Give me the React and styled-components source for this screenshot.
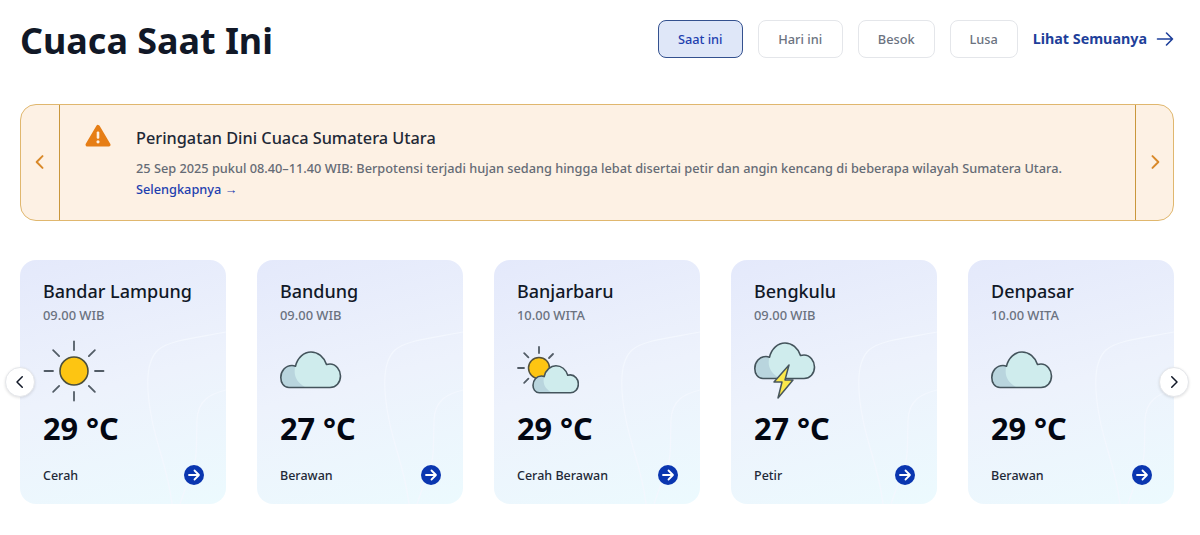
import styled, { createGlobalStyle } from "styled-components";

const GlobalStyle = createGlobalStyle`
  html, body {
    margin: 0;
    background: #fff;
    font-family: "Noto Sans", "Open Sans", sans-serif;
  }
`;

const Page = styled.div`
  width: 1200px;
  height: 535px;
  box-sizing: border-box;
  padding: 20px 26px 0 20px;
  overflow: hidden;
`;

const Header = styled.header`
  display: flex;
  align-items: center;
  justify-content: space-between;
  height: 38px;
`;

const Title = styled.h1`
  margin: 4px 0 0;
  font-size: 35.9px;
  line-height: 42px;
  font-weight: 700;
  color: #111827;
`;

const Tabs = styled.nav`
  display: flex;
  align-items: center;
`;

const Tab = styled.button`
  width: ${(p) => p.$width}px;
  height: 38px;
  margin-right: 15px;
  padding: 0;
  box-sizing: border-box;
  border-radius: 8px;
  font: 500 12.75px "Noto Sans", sans-serif;
  border: 1px solid ${(p) => (p.$active ? "#34518f" : "#e4e6ea")};
  background: ${(p) => (p.$active ? "#dfe7f8" : "#fff")};
  color: ${(p) => (p.$active ? "#1e40af" : "#6b7280")};
`;

const SeeAll = styled.a`
  display: flex;
  align-items: center;
  gap: 9px;
  margin-top: -1px;
  font-size: 14.3px;
  font-weight: 700;
  color: #1e3f9a;
`;

const Banner = styled.section`
  display: grid;
  grid-template-columns: 39px 1fr 38px;
  height: 117px;
  box-sizing: border-box;
  margin-top: 46px;
  background: #fdf1e4;
  border: 1px solid #e0b76e;
  border-radius: 16px;
  overflow: hidden;
`;

const BannerNav = styled.div`
  display: flex;
  align-items: center;
  justify-content: center;
  padding-bottom: 2px;
  border-${(p) => p.$side}: 1px solid #c9973c;
  color: #d98a2b;
`;

const BannerBody = styled.div`
  display: flex;
  padding: 19px 40px 0 25px;
  gap: 25px;
`;

const BannerText = styled.div`
  padding-top: 2px;
`;

const BannerTitle = styled.h2`
  margin: 0;
  font-size: 16.3px;
  line-height: 24px;
  font-weight: 500;
  color: #1f2937;
`;

const BannerCopy = styled.p`
  margin: 8px 0 0;
  font-size: 12.75px;
  line-height: 21px;
  font-weight: 500;
  color: #656b75;
`;

const MoreLink = styled.a`
  display: block;
  color: #1e40af;
  font-weight: 500;
`;

const Carousel = styled.section`
  position: relative;
  display: grid;
  grid-template-columns: repeat(5, 206px);
  justify-content: space-between;
  margin-top: 39px;
`;

const Card = styled.article`
  position: relative;
  height: 244px;
  box-sizing: border-box;
  padding: 19px 22px 0 23px;
  border-radius: 16px;
  overflow: hidden;
  background: linear-gradient(165deg, #e4e9fb 0%, #edf2fc 50%, #ecfafe 100%);
`;

const Waves = styled.svg`
  position: absolute;
  right: 0;
  bottom: 0;
  width: 206px;
  height: 244px;
  fill: none;
  stroke: #f3f7fe;
  stroke-width: 1.2;
`;

const City = styled.h3`
  position: relative;
  margin: 0;
  font-size: 18px;
  line-height: 25px;
  font-weight: 500;
  color: #111827;
`;

const LocalTime = styled.div`
  position: relative;
  margin-top: 3px;
  font-size: 12.9px;
  line-height: 17px;
  color: #6b7280;
  font-weight: 500;
`;

const IconSlot = styled.div`
  position: relative;
  height: 64px;
  margin-top: 15px;
  display: flex;
  align-items: center;
`;

const Temp = styled.div`
  position: relative;
  margin-top: 3px;
  font-size: 30.7px;
  line-height: 44px;
  font-weight: 700;
  color: #030712;
`;

const CardFooter = styled.div`
  position: relative;
  display: flex;
  align-items: center;
  justify-content: space-between;
  margin-top: 15px;
  height: 20px;
`;

const Condition = styled.span`
  font-size: 12.5px;
  font-weight: 500;
  color: #1f2937;
`;

const ArrowDot = styled.span`
  display: flex;
  align-items: center;
  justify-content: center;
  width: 20px;
  height: 20px;
  border-radius: 50%;
  background: #0a36b0;
`;

const CarouselButton = styled.button`
  position: absolute;
  top: 107px;
  ${(p) => p.$side}: -15px;
  display: flex;
  align-items: center;
  justify-content: center;
  width: 30px;
  height: 30px;
  padding: 0;
  border: 1px solid #e5e7eb;
  border-radius: 50%;
  background: #fff;
  color: #111827;
  box-shadow: 0 1px 3px rgba(0, 0, 0, 0.12);
`;

const Chevron = ({ dir, size = 16, width = 2 }) => (
  <svg width={size} height={size} viewBox="0 0 24 24" fill="none" stroke="currentColor" strokeWidth={width} strokeLinecap="round" strokeLinejoin="round">
    <path d={dir === "left" ? "M15 5l-7 7 7 7" : "M9 5l7 7-7 7"} />
  </svg>
);

const WarningIcon = () => (
  <svg width="26" height="24" viewBox="0 0 28 26">
    <path d="M14 3 L25.5 22.5 H2.5 Z" fill="#e67e16" stroke="#e67e16" strokeWidth="4" strokeLinejoin="round" />
    <rect x="12.6" y="8" width="2.8" height="8" rx="1.2" fill="#fdf0e3" />
    <circle cx="14" cy="19.3" r="1.7" fill="#fdf0e3" />
  </svg>
);

const LongArrow = () => (
  <svg width="18" height="16" viewBox="0 0 18 16" fill="none" stroke="#1e3f9a" strokeWidth="1.6" strokeLinecap="round" strokeLinejoin="round">
    <path d="M1.5 8h15M10.5 2l6 6-6 6" />
  </svg>
);

const SmallArrow = () => (
  <svg width="14" height="14" viewBox="0 0 14 14" fill="none" stroke="#fff" strokeWidth="1.8" strokeLinecap="round" strokeLinejoin="round">
    <path d="M2 7h10M7.5 2.5L12 7l-4.5 4.5" />
  </svg>
);

const CLOUD = "M9 36.5 C3.5 36.5 0.8 31.5 0.8 26.5 C0.8 20 5.5 14.5 12 14.5 C13.5 14.5 14.5 14.8 15.5 15.2 C17.5 6.5 24 1 31 1 C38 1 44 6 46.5 13.5 C47.5 13.2 48.5 13 50 13 C56 13 60.5 19 60.5 25 C60.5 31.5 56 36.5 50 36.5 Z";

const Cloud = ({ id, scale = 1, x = 0, y = 0 }) => (
  <g transform={`translate(${x} ${y}) scale(${scale})`}>
    <clipPath id={id}><path d={CLOUD} /></clipPath>
    <path d={CLOUD} fill="#cfeced" />
    <g clipPath={`url(#${id})`}>
      <path d="M0 10 H17 C13 20 13 30 27 37 H0 Z" fill="#b9d5de" />
    </g>
    <path d={CLOUD} fill="none" stroke="#44545c" strokeWidth={1.6 / scale} strokeLinejoin="round" />
  </g>
);

const Rays = ({ cx, cy, r1, r2, skip = [], width = 1.8 }) => (
  <g stroke="#525c66" strokeWidth={width} strokeLinecap="round">
    {[0, 45, 90, 135, 180, 225, 270, 315].filter((a) => !skip.includes(a)).map((a) => {
      const t = (a * Math.PI) / 180;
      return (
        <line key={a} x1={cx + r1 * Math.cos(t)} y1={cy + r1 * Math.sin(t)} x2={cx + r2 * Math.cos(t)} y2={cy + r2 * Math.sin(t)} />
      );
    })}
  </g>
);

const SunIcon = () => (
  <svg width="62" height="62" viewBox="0 0 62 62">
    <Rays cx={31} cy={31} r1={21} r2={29.5} />
    <circle cx="31" cy="31" r="14" fill="#fdc512" stroke="#4b4f3c" strokeWidth="1.6" />
  </svg>
);

const CloudIcon = ({ id }) => (
  <svg width="62" height="62" viewBox="0 0 62 62">
    <Cloud id={id} y={11} />
  </svg>
);

const PartlyIcon = () => (
  <svg width="62" height="62" viewBox="0 0 62 62">
    <Rays cx={22} cy={28} r1={15} r2={21} skip={[0, 45, 90, 315]} />
    <line x1={32} y1={18} x2={36} y2={14} stroke="#525c66" strokeWidth="1.8" strokeLinecap="round" />
    <circle cx="22" cy="28" r="10.5" fill="#fdc512" stroke="#55523c" strokeWidth="1.5" />
    <Cloud id="partly" x={15.4} y={25} scale={0.76} />
  </svg>
);

const StormIcon = () => (
  <svg width="62" height="62" viewBox="0 0 62 62">
    <Cloud id="storm" y={2} />
    <path d="M35 25 L20 42 H28 L24 58 L39 40 H31 Z" fill="#fbe84a" stroke="#47565c" strokeWidth="1.5" strokeLinejoin="round" />
  </svg>
);

const WEATHER = [
  { city: "Bandar Lampung", time: "09.00 WIB", temp: "29 °C", label: "Cerah", icon: <SunIcon /> },
  { city: "Bandung", time: "09.00 WIB", temp: "27 °C", label: "Berawan", icon: <CloudIcon id="c1" /> },
  { city: "Banjarbaru", time: "10.00 WITA", temp: "29 °C", label: "Cerah Berawan", icon: <PartlyIcon /> },
  { city: "Bengkulu", time: "09.00 WIB", temp: "27 °C", label: "Petir", icon: <StormIcon /> },
  { city: "Denpasar", time: "10.00 WITA", temp: "29 °C", label: "Berawan", icon: <CloudIcon id="c2" /> },
];

const TABS = [
  { label: "Saat ini", width: 85, active: true },
  { label: "Hari ini", width: 85 },
  { label: "Besok", width: 77 },
  { label: "Lusa", width: 68 },
];

export default function App() {
  return (
    <Page>
      <GlobalStyle />
      <Header>
        <Title>Cuaca Saat Ini</Title>
        <Tabs>
          {TABS.map((t) => (
            <Tab key={t.label} $width={t.width} $active={t.active}>{t.label}</Tab>
          ))}
          <SeeAll>Lihat Semuanya <LongArrow /></SeeAll>
        </Tabs>
      </Header>

      <Banner>
        <BannerNav $side="right"><Chevron dir="left" size={20} width={2.4} /></BannerNav>
        <BannerBody>
          <WarningIcon />
          <BannerText>
            <BannerTitle>Peringatan Dini Cuaca Sumatera Utara</BannerTitle>
            <BannerCopy>
              25 Sep 2025 pukul 08.40–11.40 WIB: Berpotensi terjadi hujan sedang hingga lebat disertai petir dan angin kencang di beberapa wilayah Sumatera Utara.
              <MoreLink>Selengkapnya →</MoreLink>
            </BannerCopy>
          </BannerText>
        </BannerBody>
        <BannerNav $side="left"><Chevron dir="right" size={20} width={2.4} /></BannerNav>
      </Banner>

      <Carousel>
        {WEATHER.map((w) => (
          <Card key={w.city}>
            <Waves viewBox="0 0 206 244">
              <path d="M206 72 C175 78 150 80 138 90 C125 102 126 130 132 160 C138 190 148 210 152 244" />
              <path d="M206 130 C190 134 178 140 177 160 C176 190 178 200 170 215 L160 244" />
            </Waves>
            <City>{w.city}</City>
            <LocalTime>{w.time}</LocalTime>
            <IconSlot>{w.icon}</IconSlot>
            <Temp>{w.temp}</Temp>
            <CardFooter>
              <Condition>{w.label}</Condition>
              <ArrowDot><SmallArrow /></ArrowDot>
            </CardFooter>
          </Card>
        ))}
        <CarouselButton $side="left"><Chevron dir="left" size={18} /></CarouselButton>
        <CarouselButton $side="right"><Chevron dir="right" size={18} /></CarouselButton>
      </Carousel>
    </Page>
  );
}
